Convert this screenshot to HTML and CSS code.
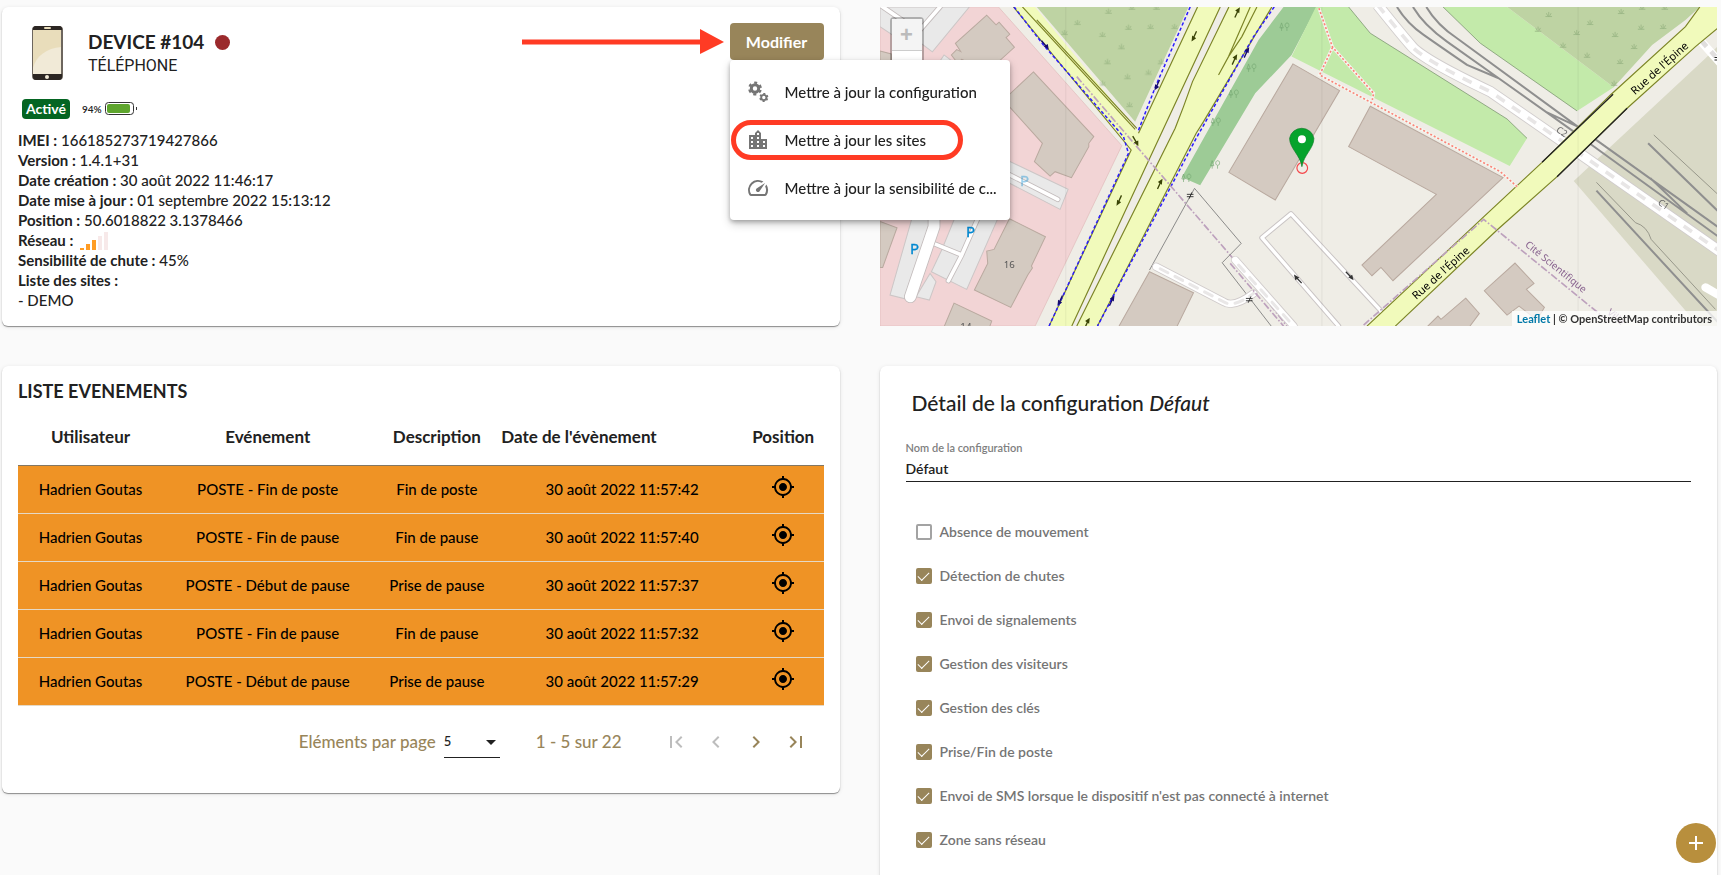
FILE: index.html
```html
<!DOCTYPE html>
<html lang="fr">
<head>
<meta charset="utf-8">
<meta name="viewport" content="width=device-width, initial-scale=1">
<title>Device #104</title>
<link rel="stylesheet" href="styles.css">
</head>
<body>
<svg class="defs" aria-hidden="true">
  <symbol id="i-target" viewBox="0 0 24 24"><path d="M12 8c-2.21 0-4 1.79-4 4s1.790 4 4 4 4-1.790 4-4-1.790-4-4-4zm8.940 3A8.994 8.994 0 0 0 13 3.060V1h-2v2.060A8.994 8.994 0 0 0 3.060 11H1v2h2.060A8.994 8.994 0 0 0 11 20.940V23h2v-2.060A8.994 8.994 0 0 0 20.940 13H23v-2h-2.060zM12 19c-3.870 0-7-3.130-7-7s3.130-7 7-7 7 3.130 7 7-3.130 7-7 7z"/></symbol>
  <symbol id="grass" viewBox="0 0 22 18"><path d="M1 16h20M11 16V2M8 14L4 6M14 14l4-8" fill="none" stroke="#8fae7c" stroke-width="2"/></symbol>
  <symbol id="tree" viewBox="0 0 32 30"><path d="M8 28V16M3 19L8 4l5 15zM24 28V18M24 18a6 7 0 1 1 1 0" fill="none" stroke="#76a873" stroke-width="2"/></symbol>
  <symbol id="way" viewBox="0 0 22 34"><path d="M4 32L14 10" stroke="currentColor" stroke-width="4"/><path d="M19 1L5 11l12 8z" fill="currentColor"/></symbol>
</svg>

<main class="board">
  <section class="card device">
    <header class="device-head">
      <svg class="phone" viewBox="0 0 32 54" aria-hidden="true">
        <rect x="0" y="0" width="31" height="54" rx="4" fill="#6d665e"/>
        <path d="M1 4a3 3 0 0 1 3-4h23a3 3 0 0 1 3 4v0H1zM1 48h29v3a3 3 0 0 1-3 3H4a3 3 0 0 1-3-3z" fill="#2c2623"/>
        <rect x="1" y="4" width="28" height="44" fill="#e9ddbb"/>
        <path d="M29 21C15 22 4 30 1 42v6h28z" fill="#f1ead7"/>
        <rect x="12" y="1" width="7" height="2" rx="1" fill="#e9ddbb"/>
        <circle cx="15" cy="51" r="2" fill="#f1ead7"/>
      </svg>
      <div class="device-name">
        <h1>DEVICE #104 <span class="status-dot"></span></h1>
        <p>TÉLÉPHONE</p>
      </div>
      <div class="edit">
        <svg class="arrow" viewBox="0 0 202 26" aria-hidden="true"><path d="M0 10.500H178V0l24 13-24 12v-9.500H0z" fill="#ff3b24"/></svg>
        <button class="edit-btn" type="button" aria-haspopup="menu" aria-expanded="true">Modifier</button>
        <div class="menu" role="menu">
          <button type="button" role="menuitem">
            <svg viewBox="0 0 24 24" aria-hidden="true"><g fill="none" stroke="#757575"><circle cx="9" cy="8.500" r="3.700" stroke-width="3"/><circle cx="9" cy="8.500" r="5.800" stroke-width="2.200" stroke-dasharray="3 3.074" transform="rotate(15 9 8.500)"/><circle cx="17.800" cy="17.500" r="2.600" stroke-width="1.900"/><circle cx="17.800" cy="17.500" r="3.800" stroke-width="1.500" stroke-dasharray="1.990 1.990" transform="rotate(15 17.800 17.500)"/></g></svg>
            <span>Mettre à jour la configuration</span>
          </button>
          <button type="button" role="menuitem" class="highlighted">
            <svg viewBox="0 0 24 24" aria-hidden="true"><path fill="#757575" d="M15 11V5l-3-3-3 3v2H3v14h18V11h-6zm-8 8H5v-2h2v2zm0-4H5v-2h2v2zm0-4H5V9h2v2zm6 8h-2v-2h2v2zm0-4h-2v-2h2v2zm0-4h-2V9h2v2zm0-4h-2V5h2v2zm6 12h-2v-2h2v2zm0-4h-2v-2h2v2z"/></svg>
            <span>Mettre à jour les sites</span>
          </button>
          <button type="button" role="menuitem">
            <svg viewBox="0 0 24 24" aria-hidden="true"><path fill="#757575" d="M20.380 8.570l-1.230 1.850a8 8 0 0 1-.220 7.580H5.070A8 8 0 0 1 15.580 6.850l1.850-1.230A10 10 0 0 0 3.350 19a2 2 0 0 0 1.720 1h13.850a2 2 0 0 0 1.740-1 10 10 0 0 0-.270-10.440zm-9.790 6.840a2 2 0 0 0 2.830 0l5.660-8.490-8.490 5.660a2 2 0 0 0 0 2.830z"/></svg>
            <span>Mettre à jour la sensibilité de c...</span>
          </button>
        </div>
      </div>
    </header>
    <div class="badges">
      <span class="badge">Activé</span>
      <span class="level">94%</span>
      <svg class="battery" viewBox="0 0 33 14" aria-hidden="true"><rect x=".500" y=".500" width="28" height="12" rx="3" fill="#fff" stroke="#333"/><rect x="2" y="2" width="23" height="9" rx="2" fill="#5ea52d"/><path d="M31.500 5v3" stroke="#333"/></svg>
    </div>
    <ul class="facts">
      <li><b>IMEI :</b> 166185273719427866</li>
      <li><b>Version :</b> 1.4.1+31</li>
      <li><b>Date création :</b> 30 août 2022 11:46:17</li>
      <li><b>Date mise à jour :</b> 01 septembre 2022 15:13:12</li>
      <li><b>Position :</b> 50.6018822 3.1378466</li>
      <li><b>Réseau :</b> <svg class="signal" viewBox="0 0 28 18" role="img" aria-label="Signal 3 sur 5"><path fill="#ff9c24" d="M0 16h4v2H0zM6 12h4v6H6zM12 8h4v10h-4z"/><path fill="#f7e9e9" d="M18 4h4v14h-4zM24 0h4v18h-4z"/></svg></li>
      <li><b>Sensibilité de chute :</b> 45%</li>
      <li><b>Liste des sites :</b></li>
      <li>- DEMO</li>
    </ul>
  </section>

  <section class="map" aria-label="Carte">
    <svg class="tiles" viewBox="30 21 2511 957" preserveAspectRatio="xMidYMid slice">
      <rect x="30" y="21" width="2511" height="957" fill="#efede6"/>
      <path d="M30 21H385L755 437L495 978H30z" fill="#f2d4d5" stroke="#dfb9ba" stroke-width="2"/>
      <g fill="#e9e9e9" stroke="#ccc6c6" stroke-width="3">
        <path d="M30 21H298L187 156L150 128 90 120 30 80z"/>
        <path d="M222 165l-40 60H300z"/>
        <path d="M400 475L594 568 570 628 400 540z"/>
        <path d="M130 640H200L120 900 60 885zM180 820l18 25-20 55-40-10zM260 640H390L290 868 184 815 215 750z"/>
      </g>
      <g fill="none" stroke-linecap="round" stroke-linejoin="round">
        <path d="M30 15L110 70M210 21L150 90M410 520L563 598M190 730L275 765L235 842M275 765L330 640" stroke="#c3bcbc" stroke-width="16"/>
        <path d="M30 15L110 70M210 21L150 90M410 520L563 598M190 730L275 765L235 842M275 765L330 640" stroke="#fff" stroke-width="11"/>
        <path d="M192 640V680L121 890" stroke="#c3bcbc" stroke-width="38"/>
        <path d="M192 640V680L121 890" stroke="#fff" stroke-width="33"/>
      </g>
      <g fill="#d4cac1" stroke="#b9a99f" stroke-width="3">
        <path d="M350 46L378 75 387 67 419 103 408 113 433 142 380 190H300L275 178 263 190 244 165 260 149 272 155 256 130z"/>
        <path d="M30 153L64 162V200H30zM30 664L81 683 38 802H30z"/>
        <path d="M490 216L671 410 656 430 656 440 604 533 555 515 540 528 493 485 517 430 400 300z"/>
        <path d="M418 656L526 710 484 798 487 804 473 825 422 922 313 870 353 790 350 753 372 748z"/>
        <path d="M252 909L365 963 355 990H218z"/>
        <path d="M838 815L970 878 915 990H740z"/>
        <path d="M1268 192L1408 272 1215 600 1076 517z"/>
      </g>
      <path d="M500 21H955L795 365z" fill="#bed3a3"/>
      <g opacity=".9">
        <use href="#grass" x="704" y="24" width="22" height="18"/><use href="#grass" x="611" y="58" width="22" height="18"/><use href="#grass" x="572" y="88" width="22" height="18"/><use href="#grass" x="686" y="94" width="22" height="18"/><use href="#grass" x="764" y="72" width="22" height="18"/><use href="#grass" x="830" y="70" width="22" height="18"/><use href="#grass" x="902" y="70" width="22" height="18"/><use href="#grass" x="743" y="130" width="22" height="18"/><use href="#grass" x="701" y="175" width="22" height="18"/><use href="#grass" x="862" y="175" width="22" height="18"/><use href="#grass" x="824" y="207" width="22" height="18"/><use href="#grass" x="761" y="220" width="22" height="18"/><use href="#grass" x="686" y="240" width="22" height="18"/><use href="#grass" x="767" y="304" width="22" height="18"/><use href="#grass" x="774" y="12" width="22" height="18"/><use href="#grass" x="848" y="12" width="22" height="18"/>
      </g>
      <path d="M1240 21H1340L1264 165 1155 280 990 556 935 532 1165 120z" fill="#9dcb96"/>
      <use href="#tree" x="1226" y="65" width="32" height="30"/><use href="#tree" x="1127" y="188" width="32" height="30"/><use href="#tree" x="1074" y="266" width="32" height="30"/><use href="#tree" x="1020" y="350" width="32" height="30"/><use href="#tree" x="932" y="518" width="32" height="30"/><use href="#tree" x="1018" y="478" width="32" height="30"/>

      <!-- main avenue -->
      <path d="M430 21H495L800 392 805 400 982 21H1205L1000 365 978 400 682 978H537L783 450z" fill="#f1fabb"/>
      <path d="M1050 21H1076L967 245 940 320 915 385 620 978H605L833 487z" fill="#efede6"/>
      <g fill="none" stroke="#7c8426" stroke-width="3.500">
        <path d="M457 21L795 388M430 21L783 450L537 978M500 60L800 385M805 400L982 21M1050 21L833 487 605 978M1076 21L967 245 940 320 915 385 620 978M1205 21L1000 365 978 400 682 978M1140 21L1075 170 1115 110 1160 21M1075 170L1045 225"/>
      </g>
      <g fill="none" stroke="#2a1bff" stroke-width="4.500" stroke-dasharray="10 7">
        <path d="M432 21L520 135 760 410 775 460 537 978M960 21L858 255 803 396M1212 21L1150 110 978 415 682 978"/>
      </g>
      <path d="M620 230L800 440 1110 800 1250 978" fill="none" stroke="#bda1bd" stroke-width="5" stroke-dasharray="22 6 5 6"/>
      <g color="#3a4406">
        <use href="#way" x="1090" y="21" width="22" height="34"/><use href="#way" x="1082" y="162" width="22" height="34"/><use href="#way" x="858" y="535" width="22" height="34"/><use href="#way" x="640" y="952" width="22" height="34"/>
        <use href="#way" x="961" y="92" width="22" height="34" transform="rotate(180 972 109)"/><use href="#way" x="736" y="584" width="22" height="34" transform="rotate(180 747 601)"/><use href="#way" x="785" y="406" width="22" height="34" transform="rotate(125 796 423)"/>
      </g>
      <g color="#150a70">
        <use href="#way" x="1118" y="141" width="22" height="34"/><use href="#way" x="714" y="885" width="22" height="34"/><use href="#way" x="850" y="238" width="22" height="34" transform="rotate(180 861 255)"/><use href="#way" x="559" y="884" width="22" height="34" transform="rotate(180 570 901)"/><use href="#way" x="514" y="118" width="22" height="34" transform="rotate(115 525 135)"/>
      </g>
      <path d="M838 810L973 565 1113 730 1056 788 1203 978" fill="none" stroke="#777" stroke-width="2.500"/>
      <g fill="none" stroke-linecap="round" stroke-linejoin="round">
        <path d="M858 800L1060 905Q1090 925 1150 880M1095 780L1270 978" stroke="#cfcaca" stroke-width="25"/>
        <path d="M858 800L1060 905Q1090 925 1150 880M1095 780L1270 978" stroke="#fff" stroke-width="20"/>
        <path d="M870 806L1060 905Q1090 925 1150 880M1105 795L1270 978" stroke="#e9e7e7" stroke-width="9" stroke-dasharray="26 24"/>
        <path d="M1405 978L1175 713 1262 641 1530 930 1540 960" stroke="#c9c4c4" stroke-width="16"/>
        <path d="M1405 978L1175 713 1262 641 1530 930 1540 960" stroke="#fff" stroke-width="10"/>
      </g>
      <path d="M1080 790L1240 978" fill="none" stroke="#bda1bd" stroke-width="5" stroke-dasharray="22 6 5 6"/>
      <g color="#333"><use href="#way" x="1272" y="820" width="22" height="34" transform="rotate(-68 1283 837)"/><use href="#way" x="1427" y="810" width="22" height="34" transform="rotate(112 1438 827)"/></g>
      <path d="M950 583h20M950 590h20M965 577l-8 19M1127 895h20M1127 902h20M1142 889l-8 19" stroke="#222" stroke-width="2.500"/>

      <!-- eastern district -->
      <g transform="translate(1260 0)">
        <path d="M77 21H175L240 100 650 357 710 415 658 498 4 170z" fill="#c3eaaa"/>
        <path d="M458 21H650L970 262 860 333 570 130z" fill="#c3eaaa"/>
        <path d="M650 21H1228L1185 60 1085 135 970 262z" fill="#bed3a3"/>
        <path d="M175 21L240 100 650 357 710 415M458 21L570 130 860 333" fill="none" stroke="#6d8662" stroke-width="2"/>
        <use href="#grass" x="764" y="34" width="22" height="18"/><use href="#grass" x="732" y="78" width="22" height="18"/><use href="#grass" x="807" y="126" width="22" height="18"/><use href="#grass" x="848" y="88" width="22" height="18"/><use href="#grass" x="888" y="58" width="22" height="18"/><use href="#grass" x="981" y="25" width="22" height="18"/><use href="#grass" x="963" y="94" width="22" height="18"/><use href="#grass" x="1041" y="72" width="22" height="18"/><use href="#grass" x="1107" y="70" width="22" height="18"/><use href="#grass" x="1020" y="130" width="22" height="18"/><use href="#grass" x="879" y="156" width="22" height="18"/><use href="#grass" x="978" y="175" width="22" height="18"/><use href="#grass" x="960" y="240" width="22" height="18"/><use href="#grass" x="1044" y="12" width="22" height="18"/><use href="#grass" x="1112" y="12" width="22" height="18"/>
        <path d="M1281 140L1245 175 850 543 1225 978H1281z" fill="#d9d9c6"/>
        <g fill="none">
          <path d="M262 15Q330 100 365 140T600 275L870 462 1290 755" stroke="#d0cccc" stroke-width="34"/>
          <path d="M262 15Q330 100 365 140T600 275L870 462 1290 755" stroke="#fff" stroke-width="29"/>
          <path d="M262 15Q330 100 365 140T600 275L870 462 1290 755" stroke="#e8e6e6" stroke-width="11" stroke-dasharray="30 27"/>
          <path d="M1228 120L1290 190M1245 862L1290 888" stroke="#fff" stroke-width="25" stroke-linecap="round"/>
          <path d="M1235 125L1275 170" stroke="#e0dede" stroke-width="14" stroke-dasharray="20 20"/>
          <path d="M320 21Q350 70 400 105T530 195L625 235M368 21Q400 75 470 125L625 235 850 395M408 21Q440 75 500 115L862 380M765 335L862 380M915 418L1281 680M900 432L1281 708M1080 535L1190 640M1073 430L1281 632M918 572L1281 965" stroke="#8f8f8f" stroke-width="6"/>
          <path d="M1090 405L1281 582M918 547L1035 668Q1070 678 1082 718L1275 928" stroke="#8a8a7e" stroke-width="2.500"/>
        </g>
        <path d="M1228 21L1185 80 960 285 755 487 575 655 230 978H315L620 690 800 530 1010 325 1215 140 1290 78V21z" fill="#f1fabb"/>
        <path d="M1228 21L1185 80 960 285 755 487 575 655 230 978M315 978L620 690 800 530 1010 325 1215 140 1290 78" fill="none" stroke="#7c8426" stroke-width="3.500"/>
        <path d="M968 283L755 487M1010 325L800 530" stroke="#222" stroke-width="4"/>
        <g fill="#d4cac1" stroke="#b9a99f" stroke-width="3">
          <path d="M240 319L638 533 308 842 272 802 245 827 215 795 438 583 175 440z"/>
          <path d="M674 789L731 850 708 868 762 922 740 960 686 918 650 945 582 872z"/>
          <path d="M526 894L567 940 530 990H400L443 948 452 958z"/>
        </g>
        <path d="M86 25L127 142 250 280 246 300M127 142L88 225 630 515 680 560" fill="none" stroke="#f5f5ef" stroke-width="9"/>
        <path d="M86 25L127 142 250 280 246 300M127 142L88 225 630 515 680 560" fill="none" stroke="#fa8579" stroke-width="5" stroke-dasharray="6 6"/>
        <path d="M220 975L580 658 950 960" fill="none" stroke="#bda1bd" stroke-width="5" stroke-dasharray="22 6 5 6"/>
        <g class="street">
          <text transform="translate(378 900) rotate(-42)">Rue de l'Épine</text>
          <text transform="translate(1034 286) rotate(-42)">Rue de l'Épine</text>
        </g>
        <text class="district" transform="translate(702 737) rotate(39)">Cité Scientifique</text>
        <text class="district" transform="translate(948 940) rotate(39)">Ville</text>
        <text class="lane" transform="translate(795 394) rotate(34)">C2</text>
        <text class="lane" transform="translate(1100 612) rotate(34)">C1</text>
        <path d="M1272 173h18M1272 180h18" stroke="#222" stroke-width="3"/>
        <path d="M95 21V978M863 21V978" stroke="#000" stroke-opacity=".06" stroke-width="3"/>
        <!-- position marker -->
        <circle cx="36" cy="504" r="16" fill="none" stroke="#f5464a" stroke-width="3.500"/>
        <path d="M35 500C30 465-2 445-2 415a37 36 0 0 1 73 0C71 445 40 465 35 500z" fill="#06a32c" stroke="#0a7d26" stroke-width="2"/>
        <circle cx="35" cy="418" r="12" fill="#fff"/>
      </g>
      <path d="M587 21V978" stroke="#000" stroke-opacity=".06" stroke-width="3"/>
      <g class="parking"><text x="120" y="762">P</text><text x="288" y="712">P</text><text x="450" y="557" opacity=".4">P</text></g>
      <text class="number" x="401" y="803">16</text>
      <text class="number" x="271" y="990">14</text>
    </svg>
    <div class="zoom"><button type="button" aria-label="Zoom avant" disabled>+</button><button type="button" aria-label="Zoom arrière">−</button></div>
    <p class="credits"><a href="#leaflet">Leaflet</a> | © OpenStreetMap contributors</p>
  </section>

  <section class="card events">
    <h2>LISTE EVENEMENTS</h2>
    <table>
      <colgroup><col class="c-user"><col class="c-event"><col class="c-desc"><col class="c-date"><col class="c-pos"></colgroup>
      <thead><tr><th>Utilisateur</th><th>Evénement</th><th>Description</th><th class="left">Date de l'évènement</th><th>Position</th></tr></thead>
      <tbody>
        <tr><td>Hadrien Goutas</td><td>POSTE - Fin de poste</td><td>Fin de poste</td><td>30 août 2022 11:57:42</td><td><button type="button" aria-label="Localiser"><svg><use href="#i-target"/></svg></button></td></tr>
        <tr><td>Hadrien Goutas</td><td>POSTE - Fin de pause</td><td>Fin de pause</td><td>30 août 2022 11:57:40</td><td><button type="button" aria-label="Localiser"><svg><use href="#i-target"/></svg></button></td></tr>
        <tr><td>Hadrien Goutas</td><td>POSTE - Début de pause</td><td>Prise de pause</td><td>30 août 2022 11:57:37</td><td><button type="button" aria-label="Localiser"><svg><use href="#i-target"/></svg></button></td></tr>
        <tr><td>Hadrien Goutas</td><td>POSTE - Fin de pause</td><td>Fin de pause</td><td>30 août 2022 11:57:32</td><td><button type="button" aria-label="Localiser"><svg><use href="#i-target"/></svg></button></td></tr>
        <tr><td>Hadrien Goutas</td><td>POSTE - Début de pause</td><td>Prise de pause</td><td>30 août 2022 11:57:29</td><td><button type="button" aria-label="Localiser"><svg><use href="#i-target"/></svg></button></td></tr>
      </tbody>
    </table>
    <nav class="pager" aria-label="Pagination">
      <label for="size">Eléments par page</label>
      <span class="select"><select id="size"><option>5</option><option>10</option><option>25</option></select></span>
      <span class="range">1 - 5 sur 22</span>
      <span class="steps">
        <button type="button" aria-label="Première page" disabled><svg viewBox="0 0 24 24"><path d="M18.410 16.590L13.820 12l4.590-4.590L17 6l-6 6 6 6zM6 6h2v12H6z"/></svg></button>
        <button type="button" aria-label="Page précédente" disabled><svg viewBox="0 0 24 24"><path d="M15.410 7.410L14 6l-6 6 6 6 1.410-1.410L10.830 12z"/></svg></button>
        <button type="button" aria-label="Page suivante"><svg viewBox="0 0 24 24"><path d="M10 6L8.590 7.410 13.170 12l-4.580 4.590L10 18l6-6z"/></svg></button>
        <button type="button" aria-label="Dernière page"><svg viewBox="0 0 24 24"><path d="M5.590 7.410L10.180 12l-4.590 4.590L7 18l6-6-6-6zM16 6h2v12h-2z"/></svg></button>
      </span>
    </nav>
  </section>

  <section class="card config">
    <h2>Détail de la configuration <em>Défaut</em></h2>
    <div class="field">
      <label for="name">Nom de la configuration</label>
      <input id="name" type="text" value="Défaut">
    </div>
    <div class="options">
      <label><input type="checkbox">Absence de mouvement</label>
      <label><input type="checkbox" checked>Détection de chutes</label>
      <label><input type="checkbox" checked>Envoi de signalements</label>
      <label><input type="checkbox" checked>Gestion des visiteurs</label>
      <label><input type="checkbox" checked>Gestion des clés</label>
      <label><input type="checkbox" checked>Prise/Fin de poste</label>
      <label><input type="checkbox" checked>Envoi de SMS lorsque le dispositif n'est pas connecté à internet</label>
      <label><input type="checkbox" checked>Zone sans réseau</label>
    </div>
  </section>
</main>
<button class="fab" type="button" aria-label="Ajouter"><svg viewBox="0 0 24 24"><path d="M11 5h2v6h6v2h-6v6h-2v-6H5v-2h6z" fill="#fff"/></svg></button>
</body>
</html>
```
FILE: styles.css
```css
:root {
  --medium: "Lato Medium", Lato, "Liberation Sans", sans-serif;
  --semibold: "Lato Semibold", "Lato Medium", Lato, "Liberation Sans", sans-serif;
  --bold: Lato, "Liberation Sans", sans-serif;
  --gold: #98855a;
  --ink: #212121;
}

* { box-sizing: border-box; }

body {
  margin: 0;
  background: #fafafa;
  color: var(--ink);
  font: 15px/20px var(--medium);
  overflow: hidden;
}

h1, h2, p, ul { margin: 0; padding: 0; }
h1, h2, th, b { font-family: var(--bold); font-weight: 700; }
button, input, select { font: inherit; color: inherit; }
button { border: 0; padding: 0; background: none; cursor: pointer; }
.defs { position: absolute; width: 0; height: 0; }

.board {
  display: grid;
  grid-template-columns: minmax(0, 1fr) minmax(0, 1fr);
  gap: 40px;
  align-items: start;
  padding: 7px 4px 0 2px;
}

.card {
  background: #fff;
  border-radius: 6px;
  padding: 16px;
  box-shadow: 0 1px 1px rgba(0, 0, 0, .4), 0 1px 4px rgba(0, 0, 0, .1);
}

/* Device */
.device-head { display: flex; align-items: flex-start; }
.phone { width: 32px; height: 54px; margin: 3px 24px 0 14px; }
.device-name { flex: 1; padding-top: 7px; }
.device-name h1 {
  display: flex;
  align-items: center;
  gap: 11px;
  font-size: 19px;
  line-height: 24px;
}
.device-name p { font: 16px/24px Roboto, sans-serif; }
.status-dot { width: 15px; height: 15px; border-radius: 50%; background: #9b2a2c; }

.edit { position: relative; z-index: 2; display: flex; align-items: center; gap: 6px; }
.arrow { width: 202px; height: 26px; }
.edit-btn {
  height: 37px;
  width: 94px;
  border-radius: 4px;
  background: var(--gold);
  color: #fff;
  font: 700 16px/20px var(--bold);
}
.menu {
  position: absolute;
  top: 37px;
  left: 208px;
  width: 280px;
  padding: 8px 0;
  border-radius: 4px;
  background: #fff;
  box-shadow: 0 2px 4px rgba(0, 0, 0, .25), 0 4px 10px rgba(0, 0, 0, .2);
}
.menu button {
  position: relative;
  display: flex;
  align-items: center;
  gap: 15px;
  width: 100%;
  height: 48px;
  padding: 0 12px 0 16px;
  text-align: left;
  white-space: nowrap;
}
.menu svg { width: 24px; height: 24px; flex: none; }
.menu .highlighted::after {
  content: "";
  position: absolute;
  inset: 4px 47px 4px 1px;
  border: 5px solid #ff3b24;
  border-radius: 20px;
}

.badges { display: flex; align-items: center; margin: 19px 0 11px 4px; }
.badge {
  padding: 0 4px;
  border-radius: 4px;
  background: #046522;
  color: #fff;
  font: 700 14px/20px var(--bold);
}
.level { margin: 0 3px 0 12px; font-family: var(--semibold); font-size: 10px; }
.battery { width: 33px; height: 14px; }

.facts { list-style: none; }
.facts li { height: 20px; white-space: nowrap; }
.signal { width: 28px; height: 18px; margin-left: 3px; vertical-align: -4px; }

/* Map */
.map { position: relative; align-self: stretch; overflow: hidden; }
.tiles { position: absolute; inset: 0; width: 100%; height: 100%; }
.street { font: 33px "Noto Sans", sans-serif; fill: #000; }
.district { font: 30px "Noto Sans", sans-serif; fill: #8a6590; }
.lane { font: 28px "Noto Sans", sans-serif; fill: #666; }
.parking { font: 45px "Noto Sans", sans-serif; fill: #0088d0; stroke: #0088d0; stroke-width: 1; }
.number { font: 29px "Noto Sans", sans-serif; fill: #555; }
.zoom {
  position: absolute;
  top: 10px;
  left: 10px;
  border: 2px solid rgba(0, 0, 0, .25);
  border-radius: 4px;
}
.zoom button {
  display: block;
  width: 30px;
  height: 32px;
  border-bottom: 1px solid #ccc;
  background: #fff;
  font: 700 22px/32px "Liberation Sans", sans-serif;
}
.zoom button:disabled { background: #f4f4f4; color: #bbb; }
.credits {
  position: absolute;
  right: 0;
  bottom: 0;
  padding: 0 5px;
  background: rgba(255, 255, 255, .75);
  font: 700 11px/15px var(--bold);
  color: #333;
}
.credits a { color: #0078a8; text-decoration: none; }

/* Events */
.events { padding-bottom: 15px; }
.events h2 { font-size: 18px; line-height: 18px; }
.events table { width: 100%; table-layout: fixed; border-collapse: collapse; margin-top: 9px; }
.c-user { width: 18%; }
.c-event { width: 26%; }
.c-desc { width: 16%; }
.c-date { width: 30%; }
.c-pos { width: 10%; }
.events th {
  height: 56px;
  padding: 0;
  border-bottom: 1px solid #827764;
  font-size: 17px;
}
.events th.left { text-align: left; }
.events td {
  height: 48px;
  padding: 0;
  background: #ef9325;
  border-bottom: 1px solid #e5d9c6;
  color: #000;
  text-align: center;
}
.events td button, .events td svg { display: block; width: 24px; height: 24px; margin: 0 auto; }
.events td button { margin-bottom: 4px; }

.pager {
  display: flex;
  align-items: center;
  justify-content: flex-end;
  padding: 16px 8px 16px 0;
  color: var(--gold);
  font-size: 17px;
}
.select { position: relative; margin: 0 36px 0 8px; }
.select select {
  appearance: none;
  display: block;
  width: 56px;
  height: 32px;
  border: 0;
  border-bottom: 1px solid var(--ink);
  border-radius: 0;
  background: none;
  color: var(--ink);
  font-size: 13px;
}
.select::after {
  content: "";
  position: absolute;
  top: 14px;
  right: 4px;
  border: 5px solid transparent;
  border-top-color: var(--ink);
  border-bottom: 0;
}
.range { margin-right: 34px; }
.steps { display: flex; }
.steps button { display: grid; place-items: center; width: 40px; height: 40px; }
.steps svg { width: 24px; height: 24px; fill: var(--gold); }
.steps button:disabled svg { fill: #bdbdbd; }

/* Configuration */
.config { padding: 24px 26px; }
.config h2 { padding-left: 6px; font: 21px/26px var(--medium); }
.field { margin-top: 24px; }
.field label { display: block; color: #808080; font: 11px/16px var(--semibold); }
.field input {
  display: block;
  width: 100%;
  height: 26px;
  padding: 0;
  border: 0;
  border-bottom: 1px solid var(--ink);
  background: none;
  font: 14px/20px var(--semibold);
}
.options { padding: 28px 0 0 10px; font: 14px/20px var(--semibold); }
.options label { display: flex; align-items: center; gap: 8px; height: 44px; color: #757575; }
.options input {
  appearance: none;
  display: grid;
  place-items: center;
  width: 16px;
  height: 16px;
  margin: 0;
  border: 2px solid #a3a3a3;
  border-radius: 2px;
}
.options input:checked { border-color: var(--gold); background: var(--gold); }
.options input:checked::before {
  content: "";
  width: 10px;
  height: 5px;
  border: solid #fff;
  border-width: 0 0 1px 1px;
  transform: translateY(-1px) rotate(-45deg);
}

.fab {
  position: fixed;
  right: 5px;
  bottom: 12px;
  display: grid;
  place-items: center;
  width: 40px;
  height: 40px;
  border-radius: 50%;
  background: #b88f3d;
}
.fab svg { width: 24px; height: 24px; }
```
